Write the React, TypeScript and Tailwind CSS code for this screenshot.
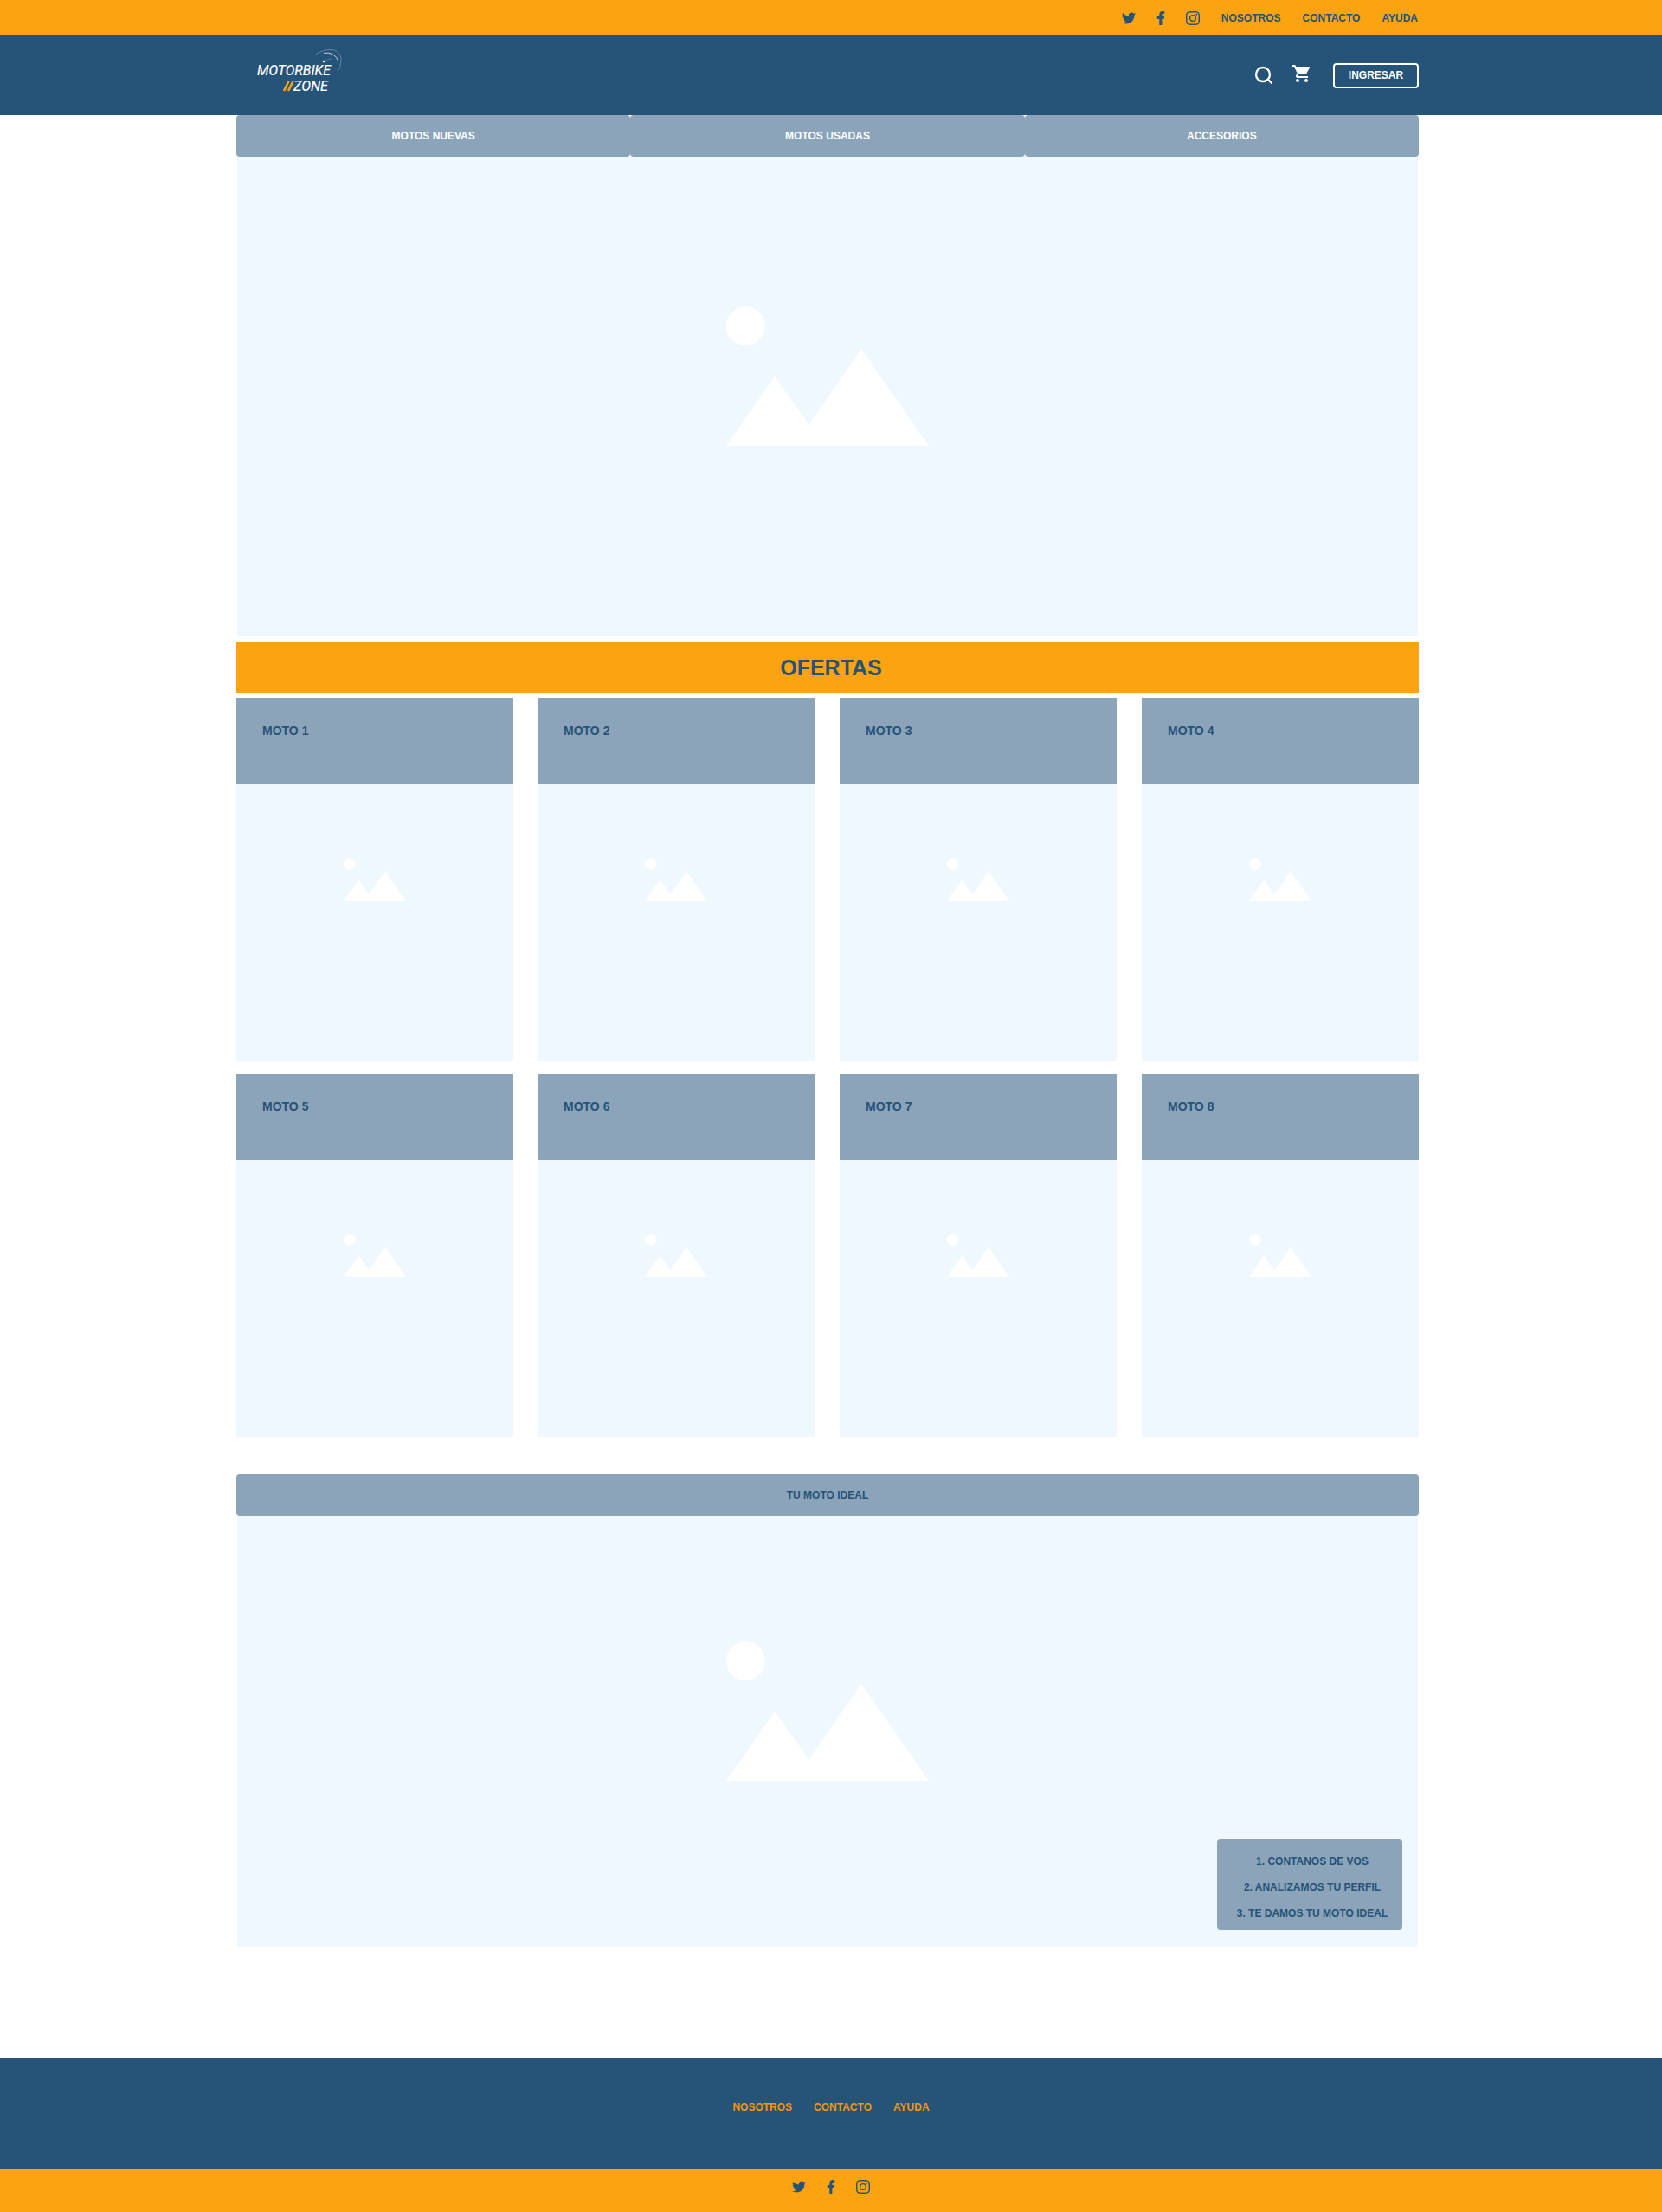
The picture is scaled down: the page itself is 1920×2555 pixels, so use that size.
import React from "react";
import { MdShoppingCart } from "react-icons/md";
import { FiSearch } from "react-icons/fi";
import { BsInstagram } from "react-icons/bs";
import { FaFacebookF, FaTwitter } from "react-icons/fa";

function Landscape({ className }: { className: string }) {
  return (
    <svg viewBox="0 0 234 161" className={className} fill="#fff" aria-hidden="true">
      <circle cx="22.3" cy="22.6" r="22.5" />
      <path d="M0 161 56 81 95.500 136.500 156 49 234 161Z" />
    </svg>
  );
}

function Logo() {
  return (
    <svg viewBox="0 0 104 56" className="h-14 w-[104px]" aria-label="Motorbike Zone">
      <g fontFamily="Roboto, sans-serif" fontStyle="italic" fontWeight="400" fontSize="15.6" fill="#fff" stroke="#fff" strokeWidth=".2">
        <text x="4" y="33.800" textLength="85" lengthAdjust="spacingAndGlyphs">MOTORBIKE</text>
        <text x="46" y="51.800" textLength="40" lengthAdjust="spacingAndGlyphs">ZONE</text>
      </g>
      <path d="M35 52 40.500 41M40 52 45.500 41" stroke="#fca311" strokeWidth="2.600" fill="none" />
      <circle cx="81" cy="18" r="1.300" fill="#fff" />
      <path d="M82 17.500 91 14" stroke="#6f8ea8" strokeWidth=".6" />
      <path d="M81 8.500A14 14 0 0 1 98 18" stroke="#c5d1dc" strokeWidth="1" fill="none" />
      <path d="M71.500 10C86 .500 104 3 100.500 20Q100.500 24 98.500 28" stroke="#5f83a0" strokeWidth="1" fill="none" />
    </svg>
  );
}

function Social() {
  return (
    <>
      <a className="flex w-4 justify-center"><FaTwitter size={16} /></a>
      <a className="flex w-4 justify-center"><FaFacebookF size={16} /></a>
      <a className="flex w-4 justify-center"><BsInstagram size={16} /></a>
    </>
  );
}

function Links() {
  return (
    <>
      <a>NOSOTROS</a>
      <a>CONTACTO</a>
      <a>AYUDA</a>
    </>
  );
}

function Card({ n }: { n: number }) {
  return (
    <article className="w-80">
      <div className="h-[100px] bg-[#8ba4ba] pt-[28px] pl-[30px] text-[14px] leading-[20px] text-[#265378]">MOTO {n}</div>
      <div className="flex h-80 justify-center bg-[#f0f8ff] pt-[85px]">
        <Landscape className="h-[50px] w-[72px]" />
      </div>
    </article>
  );
}

export default function App() {
  return (
    <div className="min-h-[2555px] bg-white font-['Liberation_Sans',Arial,sans-serif] text-[12px] font-bold">
      <div className="h-[41px] bg-[#fca311] text-[#265378]">
        <div className="ml-[273px] flex h-full w-[1366px] items-center justify-end gap-[21px] pr-px">
          <Social />
          <div className="ml-[4px] flex gap-[25px]"><Links /></div>
        </div>
      </div>
      <header className="h-[92px] bg-[#265378] text-white">
        <div className="ml-[273px] flex h-full w-[1366px] items-start justify-between">
          <div className="pt-[12px] pl-5"><Logo /></div>
          <div className="flex items-start pt-[32px]">
            <FiSearch size={24} strokeWidth={2.3} className="mt-[2px]" />
            <MdShoppingCart size={24} className="ml-5" />
            <button className="ml-[24px] h-[29px] w-[99px] rounded border-2 border-white pb-px">INGRESAR</button>
          </div>
        </div>
      </header>
      <main className="ml-[273px] w-[1366px]">
        <nav className="grid h-12 grid-cols-3 text-white">
          {["MOTOS NUEVAS", "MOTOS USADAS", "ACCESORIOS"].map((t) => (
            <a key={t} className="flex items-center justify-center rounded bg-[#8ba4ba]">{t}</a>
          ))}
        </nav>
        <section className="mx-px flex h-[554px] justify-center bg-[#f0f8ff] pt-[173px]">
          <Landscape className="h-[161px] w-[234px]" />
        </section>
        <h2 className="mt-[6px] h-[60px] bg-[#fca311] pl-[8px] text-center text-[25px] leading-[60px] text-[#265378]">OFERTAS</h2>
        <section className="mt-[5px] grid grid-cols-[348px_349px_349px_320px] gap-y-[14px]">
          {[1, 2, 3, 4, 5, 6, 7, 8].map((n) => <Card key={n} n={n} />)}
        </section>
        <h3 className="mt-[43px] flex h-12 items-center justify-center rounded bg-[#8ba4ba] text-[#265378]">TU MOTO IDEAL</h3>
        <section className="relative mx-px flex h-[498px] justify-center bg-[#f0f8ff] pt-[145px]">
          <Landscape className="h-[161px] w-[234px]" />
          <ol className="absolute right-[18px] bottom-5 flex h-[105px] w-[214px] flex-col items-center rounded bg-[#8ba4ba] pt-[11px] pl-[6px] leading-[30px] text-[#265378]">
            <li>1. CONTANOS DE VOS</li>
            <li>2. ANALIZAMOS TU PERFIL</li>
            <li>3. TE DAMOS TU MOTO IDEAL</li>
          </ol>
        </section>
      </main>
      <footer className="mt-[128px]">
        <div className="flex h-32 justify-center gap-[25px] bg-[#265378] pt-[48px] text-[#f39508]"><Links /></div>
        <div className="flex h-[50px] justify-center gap-[21px] bg-[#fca311] pt-[13px] text-[#265378]"><Social /></div>
      </footer>
    </div>
  );
}
